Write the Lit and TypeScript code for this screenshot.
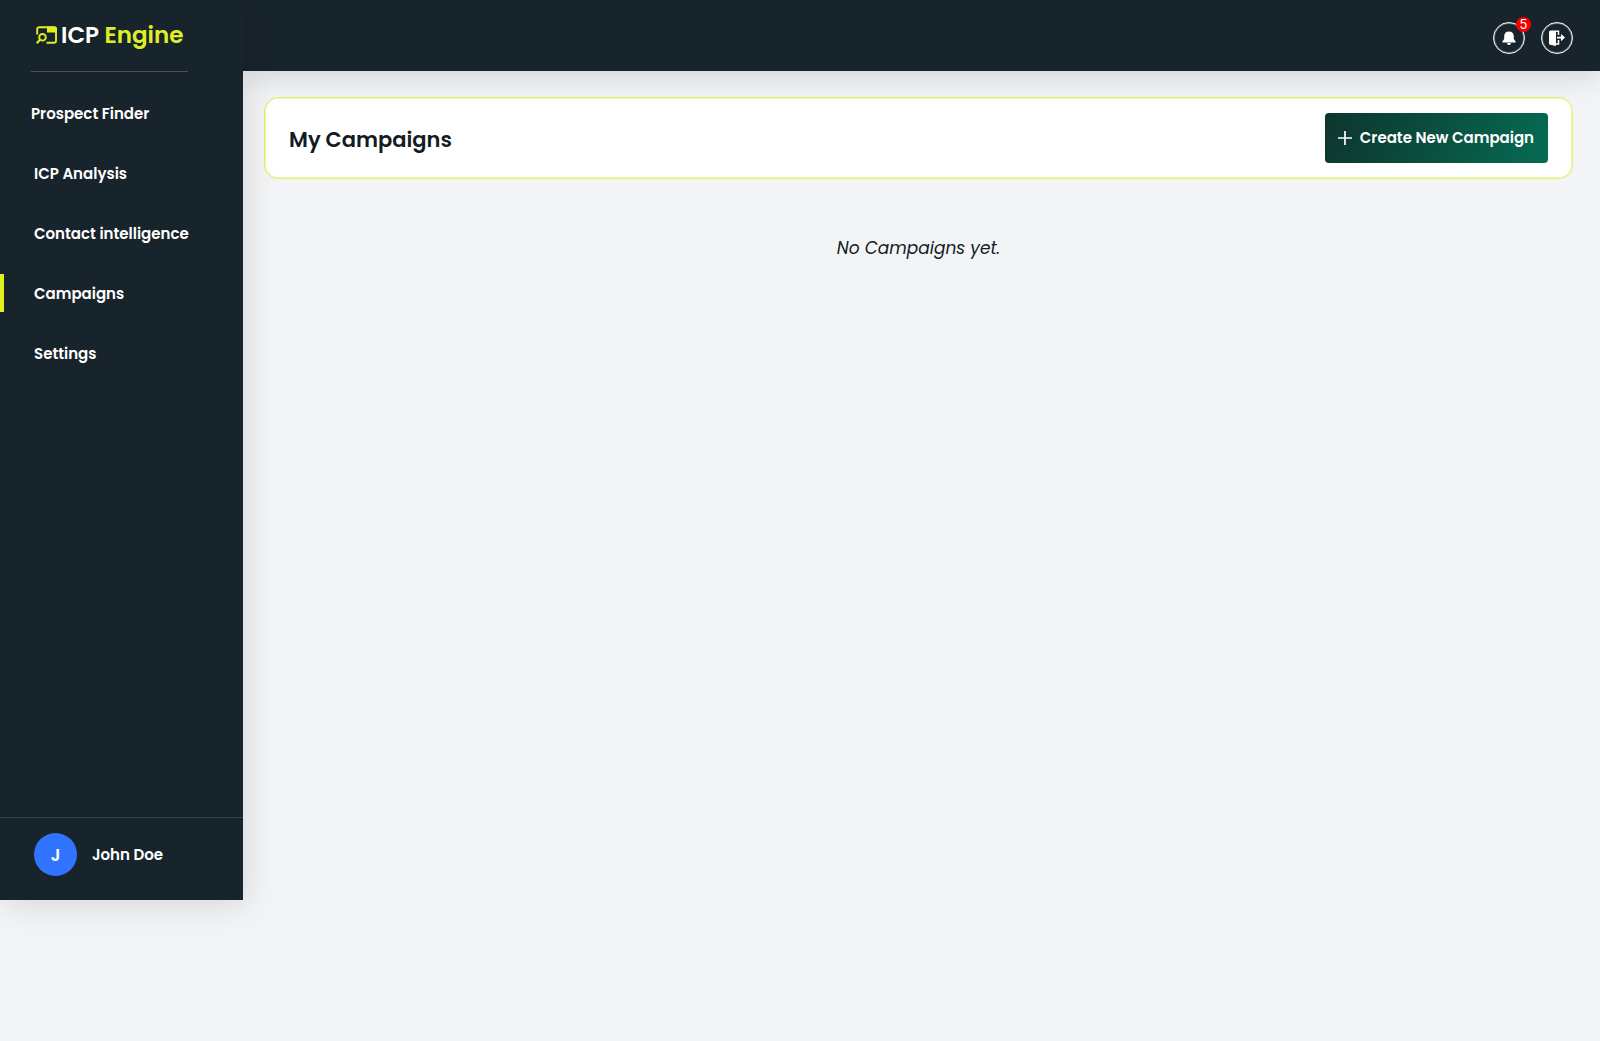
import { LitElement, html, css, svg } from "lit";
import { customElement, state } from "lit/decorators.js";

const logoIcon = svg`
  <path d="M1.200 8.500V3.200a2 2 0 0 1 2-2H18a2 2 0 0 1 2 2v11.600a2 2 0 0 1-2 2h-7.500" fill="none" stroke="currentColor" stroke-width="1.900"/>
  <path d="M11 .400H18.500a2.500 2.500 0 0 1 2.500 2.500V6.500H11z" fill="currentColor"/>
  <circle cx="6.500" cy="11.300" r="3.300" fill="none" stroke="currentColor" stroke-width="1.900"/>
  <path d="M4.200 13.600 .800 17.200" stroke="currentColor" stroke-width="2.200" fill="none"/>
`;

const bellIcon = svg`
  <path d="M7 .500C4 .500 2.200 2.500 2.200 5.200V8L.500 10.200c-.500.700-.100 1.300.600 1.300h11.800c.700 0 1.100-.600.600-1.300L11.800 8V5.200C11.800 2.500 10 .500 7 .500z"/>
  <path d="M5 12h4a2 2 0 0 1-4 0z"/>
`;

const exitIcon = svg`
  <path d="M1.500 .500H5.500L7 2v14L1.200 14.800A1.500 1.500 0 0 1 0 13.300V2A1.500 1.500 0 0 1 1.500 .500z"/>
  <path d="M5.500 1.200h4v3.800M9.500 10v4H6.500" fill="none" stroke="currentColor" stroke-width="1.500"/>
  <path d="M8 6.800h4V4L16 7.600l-4 3.600V8.500H8z"/>
`;

@customElement("app-root")
export class AppRoot extends LitElement {
  static styles = css`
    :host {
      display: block;
      color: #121c24;
      background: #f2f4f6;
      font-family: Poppins, Inter, "Liberation Sans", sans-serif;
      font-size: 15px;
      font-weight: 600;
      line-height: 24px;
    }
    * { box-sizing: border-box; }
    a { color: inherit; text-decoration: none; }
    svg { display: block; }
    button { font: inherit; cursor: pointer; }
    .layout { display: flex; min-height: 100vh; }
    .sidebar {
      position: relative;
      z-index: 2;
      display: flex;
      flex-direction: column;
      flex: none;
      width: 243px;
      margin-bottom: 141px;
      background: #18242b;
      color: #fff;
      box-shadow: 4px 6px 30px rgba(0, 0, 0, 0.11);
    }
    .brand {
      display: flex;
      align-items: center;
      gap: 4px;
      height: 72px;
      margin: 0 55px 0 31px;
      padding: 0 0 2px 5px;
      border-bottom: 1px solid #47525a;
      font-size: 23px;
      white-space: nowrap;
    }
    .mark { flex: none; color: #e0ee26; }
    .accent { color: #e0ee26; }
    .nav { display: flex; flex-direction: column; gap: 22px; padding-top: 22px; }
    .link {
      padding: 8px 16px 6px 30px;
      border-left: 4px solid transparent;
    }
    .link.lead { padding-left: 27px; }
    .link.active { border-left-color: #e2f020; }
    .user {
      display: flex;
      align-items: center;
      gap: 15px;
      height: 83px;
      margin-top: auto;
      padding: 0 34px 9px;
      border-top: 1px solid #38444b;
    }
    .avatar {
      display: grid;
      place-items: center;
      width: 43px;
      height: 43px;
      border-radius: 50%;
      background: #3174ff;
      font-size: 17px;
    }
    .page { flex: 1; min-width: 0; }
    .topbar {
      display: flex;
      justify-content: flex-end;
      gap: 16px;
      height: 71px;
      padding: 22px 27px 0;
      background: #18242b;
      box-shadow: 0 5px 30px rgba(0, 0, 0, 0.14);
    }
    .round {
      position: relative;
      display: grid;
      place-items: center;
      width: 32px;
      height: 32px;
      padding: 0;
      border: 1px solid #fff;
      border-radius: 50%;
      background: none;
      box-shadow: inset 0 0 0 1px rgba(255, 255, 255, 0.35);
      color: #fff;
    }
    .badge {
      position: absolute;
      top: -6px;
      right: -7px;
      width: 15px;
      height: 15px;
      border-radius: 50%;
      background: #f80000;
      font-family: Inter, sans-serif;
      font-size: 13px;
      font-weight: 400;
      line-height: 15px;
      text-align: center;
    }
    .content { padding: 26px 27px 26px 21px; }
    .card {
      display: flex;
      align-items: center;
      justify-content: space-between;
      padding: 15px 24px;
      border: 1px solid #e4ee68;
      border-radius: 14px;
      background: #fff;
      box-shadow: inset 0 0 0 1px #f1f6b8;
    }
    .title { margin: 0; padding-top: 3px; font-size: 21px; font-weight: 600; line-height: 32px; }
    .create {
      display: flex;
      align-items: center;
      gap: 8px;
      height: 50px;
      padding: 0 14px 0 13px;
      border: 0;
      border-radius: 4px;
      background: linear-gradient(110deg, #0d352e, #066b53);
      color: #fff;
    }
    .empty {
      margin: 57px 0 0;
      font-size: 17px;
      font-style: italic;
      font-weight: 400;
      text-align: center;
    }
  `;

  @state() private current = "Campaigns";

  private items = ["Prospect Finder", "ICP Analysis", "Contact intelligence", "Campaigns", "Settings"];

  render() {
    return html`
      <div class="layout">
        <aside class="sidebar">
          <a class="brand" href="#">
            <svg class="mark" width="21" height="18" viewBox="0 0 21 18" aria-hidden="true">${logoIcon}</svg>
            <span>ICP <span class="accent">Engine</span></span>
          </a>
          <nav class="nav">
            ${this.items.map(
              (name, i) => html`<a
                href="#"
                class="link ${i === 0 ? "lead" : ""} ${name === this.current ? "active" : ""}"
                @click=${() => (this.current = name)}
              >${name}</a>`
            )}
          </nav>
          <div class="user"><span class="avatar">J</span><span>John Doe</span></div>
        </aside>
        <div class="page">
          <header class="topbar">
            <button class="round" aria-label="Notifications">
              <svg width="14" height="14" viewBox="0 0 14 14" fill="currentColor">${bellIcon}</svg>
              <span class="badge">5</span>
            </button>
            <button class="round" aria-label="Log out">
              <svg width="16" height="16" viewBox="0 0 16 16" fill="currentColor">${exitIcon}</svg>
            </button>
          </header>
          <main class="content">
            <section class="card">
              <h1 class="title">My Campaigns</h1>
              <button class="create">
                <svg width="14" height="14" viewBox="0 0 14 14" aria-hidden="true">
                  <path d="M7 0v14M0 7h14" stroke="currentColor" stroke-width="1.700" />
                </svg>
                Create New Campaign
              </button>
            </section>
            <p class="empty">No Campaigns yet.</p>
          </main>
        </div>
      </div>
    `;
  }
}
